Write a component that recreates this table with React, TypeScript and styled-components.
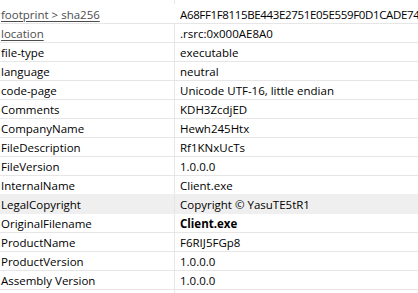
import React from "react";
import styled, { createGlobalStyle } from "styled-components";

const Global = createGlobalStyle`
  html, body { margin: 0; padding: 0; background: #ffffff; }
  body { font-family: "Open Sans", "Noto Sans", sans-serif; overflow: hidden; }
`;

const Table = styled.div`
  width: 418px;
  height: 293px;
  overflow: hidden;
  display: flex;
  flex-direction: column;
  font-size: 11.5px;
  color: #000;
`;

const Row = styled.div<{ $shade?: boolean; $noBorder?: boolean; $h?: number }>`
  display: grid;
  grid-template-columns: 174px 1fr;
  height: ${(p) => p.$h ?? 18}px;
  flex: none;
  background: ${(p) => (p.$shade ? "#efefef" : "#fff")};
  box-shadow: ${(p) => (p.$shade ? "0 -1px 0 #efefef" : "none")};
  border-bottom: 1px solid ${(p) => (p.$noBorder ? "transparent" : p.$shade ? "#efefef" : "#e6e6e6")};
`;

const KeyCell = styled.div<{ $link?: boolean }>`
  padding-left: 1px;
  display: flex;
  align-items: center;
  white-space: nowrap;
  overflow: hidden;
  color: ${(p) => (p.$link ? "#4d4d4d" : "#000")};
  text-decoration: ${(p) => (p.$link ? "underline" : "none")};
  text-underline-offset: 2px;
`;

const ValueCell = styled.div<{ $bold?: boolean; $divider?: boolean; $tight?: boolean }>`
  border-left: 1px solid ${(p) => (p.$divider === false ? "transparent" : "#e6e6e6")};
  padding-left: 5px;
  display: flex;
  align-items: center;
  white-space: nowrap;
  overflow: hidden;
  font-weight: ${(p) => (p.$bold ? 700 : 400)};
  letter-spacing: ${(p) => (p.$tight ? "-0.35px" : "normal")};
`;

type Item = { k: string; v: string; link?: boolean; bold?: boolean; shade?: boolean };

const items: Item[] = [
  { k: "location", v: ".rsrc:0x000AE8A0", link: true },
  { k: "file-type", v: "executable" },
  { k: "language", v: "neutral" },
  { k: "code-page", v: "Unicode UTF-16, little endian" },
  { k: "Comments", v: "KDH3ZcdjED" },
  { k: "CompanyName", v: "Hewh245Htx" },
  { k: "FileDescription", v: "Rf1KNxUcTs" },
  { k: "FileVersion", v: "1.0.0.0" },
  { k: "InternalName", v: "Client.exe" },
  { k: "LegalCopyright", v: "Copyright © YasuTE5tR1", shade: true },
  { k: "OriginalFilename", v: "Client.exe", bold: true },
  { k: "ProductName", v: "F6RIJ5FGp8" },
  { k: "ProductVersion", v: "1.0.0.0" },
  { k: "Assembly Version", v: "1.0.0.0" },
];

export default function App() {
  return (
    <>
      <Global />
      <Table>
        <Row $h={4} $noBorder>
          <KeyCell />
          <ValueCell />
        </Row>
        <Row>
          <KeyCell $link>footprint &gt; sha256</KeyCell>
          <ValueCell $divider={false} $tight>
            A68FF1F8115BE443E2751E05E559F0D1CADE74
          </ValueCell>
        </Row>
        {items.map((it) => (
          <Row key={it.k} $shade={it.shade}>
            <KeyCell $link={it.link}>{it.k}</KeyCell>
            <ValueCell $bold={it.bold}>{it.v}</ValueCell>
          </Row>
        ))}
        <Row>
          <KeyCell />
          <ValueCell />
        </Row>
      </Table>
    </>
  );
}
